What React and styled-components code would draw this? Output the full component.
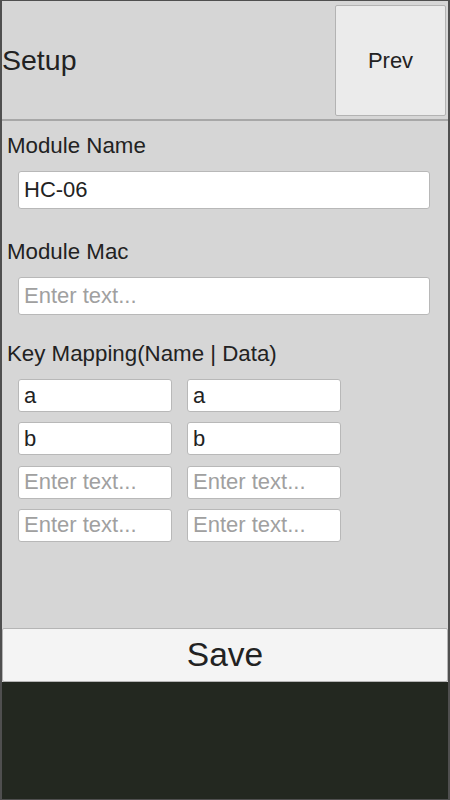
import React from "react";
import styled, { createGlobalStyle } from "styled-components";

const FONT = `"Liberation Sans", Arial, sans-serif`;

const Global = createGlobalStyle`
  html, body { margin: 0; padding: 0; background: #d6d6d6; overflow: hidden; }
  * { box-sizing: border-box; }
  body { font-family: ${FONT}; }
`;

const Frame = styled.div`
  width: 450px;
  height: 800px;
  display: flex;
  flex-direction: column;
  border-style: solid;
  border-color: #4f4f4f;
  border-width: 1px 2px 1px 2px;
  background: #d6d6d6;
`;

const Header = styled.header`
  height: 120px;
  flex: none;
  display: flex;
  align-items: center;
  justify-content: space-between;
  border-bottom: 2px solid #a7a7a7;
  background: #d6d6d6;
`;

const Title = styled.h1`
  margin: 0;
  font-size: 28.5px;
  font-weight: 400;
  color: #222;
  line-height: 1;
`;

const PrevButton = styled.button`
  align-self: flex-start;
  margin: 4px 2px 0 0;
  width: 111px;
  height: 111px;
  background: #ebebeb;
  border: 1px solid #b3b3b3;
  border-radius: 2px;
  font-family: ${FONT};
  font-size: 22px;
  color: #222;
  padding: 0;
`;

const Content = styled.main`
  flex: 1;
  padding: 12px 18px 0 5px;
  display: flex;
  flex-direction: column;
`;

const Label = styled.div`
  font-size: 22.3px;
  line-height: 26px;
  color: #222;
  margin-top: ${(p) => p.$gap || 0}px;
`;

const TextField = styled.input`
  display: block;
  margin: 12px 0 0 11px;
  width: ${(p) => (p.$small ? "154px" : "calc(100% - 11px)")};
  height: ${(p) => (p.$small ? 33 : 38)}px;
  background: #fff;
  border: 1px solid #b8b8b8;
  border-radius: 3px;
  padding: 0 5px;
  font-family: ${FONT};
  font-size: 22px;
  color: #222;
  outline: none;
  &::placeholder { color: #a0a0a0; }
`;

const Grid = styled.div`
  display: grid;
  grid-template-columns: 154px 154px;
  column-gap: 15px;
  row-gap: 10.3px;
  margin: 12px 0 0 11px;
  & > input { margin: 0; }
`;

const SaveButton = styled.button`
  flex: none;
  height: 54px;
  width: 100%;
  background: #f4f4f4;
  border: 1px solid #b5b5b5;
  border-radius: 2px;
  font-family: ${FONT};
  font-size: 33.5px;
  color: #222;
  padding: 0;
`;

const DarkArea = styled.div`
  flex: none;
  height: 117px;
  background: #232820;
`;

const rows = [
  ["a", "a"],
  ["b", "b"],
  ["", ""],
  ["", ""],
];

export default function App() {
  return (
    <>
      <Global />
      <Frame>
        <Header>
          <Title>Setup</Title>
          <PrevButton>Prev</PrevButton>
        </Header>
        <Content>
          <Label>Module Name</Label>
          <TextField defaultValue="HC-06" placeholder="Enter text..." />
          <Label $gap={30}>Module Mac</Label>
          <TextField placeholder="Enter text..." />
          <Label $gap={26}>Key Mapping(Name | Data)</Label>
          <Grid>
            {rows.map(([n, d], i) => (
              <React.Fragment key={i}>
                <TextField $small defaultValue={n} placeholder="Enter text..." />
                <TextField $small defaultValue={d} placeholder="Enter text..." />
              </React.Fragment>
            ))}
          </Grid>
        </Content>
        <SaveButton>Save</SaveButton>
        <DarkArea />
      </Frame>
    </>
  );
}
